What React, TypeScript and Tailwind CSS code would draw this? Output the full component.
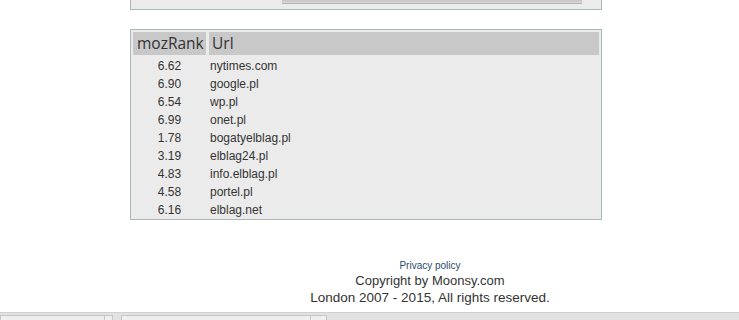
import React from "react";

const rows: [string, string][] = [
  ["6.62", "nytimes.com"],
  ["6.90", "google.pl"],
  ["6.54", "wp.pl"],
  ["6.99", "onet.pl"],
  ["1.78", "bogatyelblag.pl"],
  ["3.19", "elblag24.pl"],
  ["4.83", "info.elblag.pl"],
  ["4.58", "portel.pl"],
  ["6.16", "elblag.net"],
];

export default function App() {
  return (
    <div className="relative h-[320px] w-[739px] overflow-hidden bg-white font-['Liberation_Sans',Arial,sans-serif] text-[#333]">
      {/* previous panel, scrolled mostly out of view */}
      <div className="ml-[130px] flex h-[10px] w-[472px] border-x border-b border-[#aab8b8] bg-[#ebebeb]">
        <div className="ml-[151px] h-[4px] w-[300px] border-b border-[#b5b5b5] bg-gradient-to-b from-[#c4c4c4] to-[#d8d8d8]"></div>
      </div>

      <div className="ml-[130px] mt-[19px] w-[472px] border border-[#aab8b8] bg-[#ebebeb] p-[2px]">
        <table className="w-full table-fixed border-separate border-spacing-0">
          <thead>
            <tr>
              <th className="h-[23px] w-[73px] whitespace-nowrap bg-[#c8c8c8] pl-[4px] pr-0 text-left text-[15.5px] font-normal leading-none font-['Open_Sans',sans-serif]">
                mozRank
              </th>
              <th className="h-[23px] border-l-[3px] border-[#ebebeb] bg-[#c8c8c8] px-[3px] text-left text-[15.5px] font-normal leading-none font-['Open_Sans',sans-serif]">
                Url
              </th>
            </tr>
          </thead>
          <tbody>
            {rows.map(([rank, url]) => (
              <tr key={url} className="h-[18px] text-[12px]">
                <td className="pt-[3px] text-center leading-none">{rank}</td>
                <td className="pl-[4px] pt-[3px] leading-none">{url}</td>
              </tr>
            ))}
          </tbody>
        </table>
      </div>

      <div className="ml-[130px] mt-[40px] w-[600px] text-center">
        <a className="block text-[10px] leading-[12px] text-[#2b4a6b]">Privacy policy</a>
        <p className="text-[13px] leading-[17px]">Copyright by Moonsy.com</p>
        <p className="text-[13.5px] leading-[18px]">London 2007 - 2015, All rights reserved.</p>
      </div>

      <div className="absolute bottom-0 left-0 flex h-[8px] w-full items-end border-t border-[#d0d0d0] bg-[#e2e2e2]">
        <div className="h-[5px] w-[105px] border border-b-0 border-[#c6c6c6] bg-[#eeeeee]"></div>
        <div className="h-[5px] w-[8px] border border-b-0 border-l-0 border-[#c6c6c6] bg-[#eeeeee]"></div>
        <div className="ml-[8px] h-[5px] w-[190px] border border-b-0 border-[#c6c6c6] bg-[#eeeeee]"></div>
        <div className="h-[5px] w-[16px] border border-b-0 border-l-0 border-[#c6c6c6] bg-[#eeeeee]"></div>
      </div>
    </div>
  );
}
